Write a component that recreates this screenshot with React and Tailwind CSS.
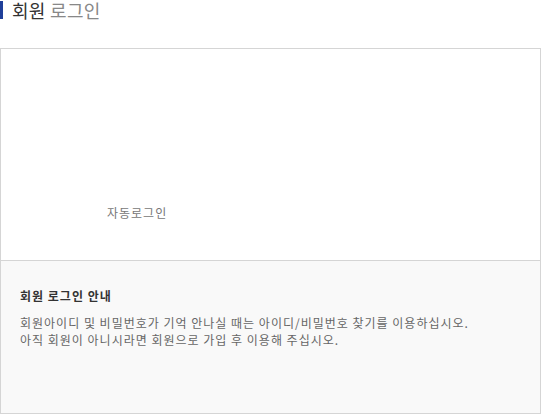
import React from "react";

export default function App() {
  return (
    <div
      className="w-[541px] h-[414px] bg-white overflow-hidden"
      style={{ fontFamily: '"Noto Sans CJK KR", "Noto Sans", sans-serif' }}
    >
      {/* Title */}
      <div className="flex items-center h-[22px] pb-[2px]">
        <span className="w-[3px] h-[18px] bg-[#1f3f9a]" />
        <h2 className="ml-[9px] text-[18px] leading-[22px] tracking-[0.3px] font-normal text-[#333]">
          회원 <span className="text-[#888]">로그인</span>
        </h2>
      </div>

      {/* Login box */}
      <div className="mt-[26px] w-[541px] h-[366px] border border-[#d5d5d5] flex flex-col">
        <div className="h-[212px] border-b border-[#d5d5d5] pl-[106px] pt-[156px]">
          <label className="block text-[12px] leading-[16px] tracking-[1px] text-[#777]">자동로그인</label>
        </div>
        <div className="flex-1 bg-[#f9f9f9] pl-[19px] pt-[27px]">
          <h3 className="text-[12px] leading-[16px] tracking-[1px] font-bold text-[#333]">회원 로그인 안내</h3>
          <p className="mt-[10px] text-[12px] leading-[17px] tracking-[1px] text-[#666]">
            회원아이디 및 비밀번호가 기억 안나실 때는 아이디/비밀번호 찾기를 이용하십시오.
            <br />
            아직 회원이 아니시라면 회원으로 가입 후 이용해 주십시오.
          </p>
        </div>
      </div>
    </div>
  );
}
